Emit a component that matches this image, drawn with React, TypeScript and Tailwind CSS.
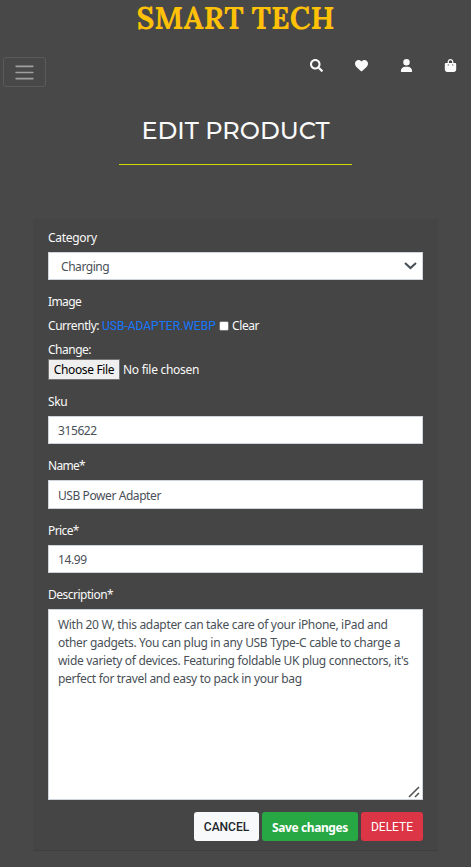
import type { ReactNode } from "react";
import { FaHeart, FaUser, FaBagShopping } from "react-icons/fa6";
import { FaSearch } from "react-icons/fa";

function Label({ children, className = "" }: { children: ReactNode; className?: string }) {
  return (
    <label className={`block h-[18px] whitespace-nowrap text-[12px] leading-[18px] text-[#fafafa] ${className}`}>
      {children}
    </label>
  );
}

function Field({ label, value, labelClass, inputClass, valueClass }: {
  label: string;
  value: string;
  labelClass: string;
  inputClass: string;
  valueClass: string;
}) {
  return (
    <>
      <Label className={labelClass}>{label}</Label>
      <div className={`mt-[5px] flex items-center border border-[#ced4da] bg-white pl-[9px] text-[12px] text-[#495057] ${inputClass}`}>
        <span className={valueClass}>{value}</span>
      </div>
    </>
  );
}

export default function App() {
  return (
    <div className="flex h-[867px] w-[471px] flex-col overflow-hidden bg-[#484848] font-['Noto_Sans',sans-serif] text-[#fafafa]">
      <header className="h-[87px]">
        <h1 className="h-[37px] text-center font-['Lora','Liberation_Serif',serif] text-[30px] leading-[37px] font-bold text-[#ffc107]">
          SMART TECH
        </h1>
        <div className="flex justify-between pr-[14px] pl-[3px]">
          <button className="mt-5 flex h-[30px] w-[43px] items-center justify-center rounded-[3px] border border-[#5b5b5b]">
            <svg width="23" height="23" viewBox="0 0 30 30" stroke="#a0a0a0" strokeWidth="2" strokeLinecap="round">
              <path d="M4 7h22M4 15h22M4 23h22" />
            </svg>
          </button>
          <nav className="mt-[22px] flex h-[13px] items-center text-[13px]">
            <FaSearch className="mr-[32px]" />
            <FaHeart className="mr-[32px]" />
            <FaUser className="mr-[31px] text-[13px]" />
            <FaBagShopping />
          </nav>
        </div>
      </header>

      <h2 className="mt-[29px] h-[30px] text-center font-['Montserrat','Lato',sans-serif] text-[24px] leading-[30px] font-medium whitespace-nowrap">
        EDIT PRODUCT
      </h2>
      <div className="mt-[18px] ml-[119px] h-px w-[233px] bg-[#d2d900]" />

      <form className="mt-[54px] ml-[33px] h-[632px] w-[405px] border-b border-[#3e3e3e] bg-[#454545] px-[15px] pt-[10px]">
        <Label className="tracking-[-0.3px]">Category</Label>
        <div className="mt-[5px] flex h-[28px] items-center justify-between border border-[#ced4da] bg-white pr-[5px] pl-[12px] text-[12px] text-[#495057]">
          <span className="pt-[2px] tracking-[-0.45px]">Charging</span>
          <svg width="13" height="8" viewBox="0 0 13 8" fill="none" stroke="#495057" strokeWidth="2.1">
            <path d="M1 1l5.5 5L12 1" />
          </svg>
        </div>

        <Label className="mt-[13px] tracking-[-0.6px]">Image</Label>
        <div className="mt-[6px] flex h-[18px] items-center text-[12px] leading-[18px] whitespace-nowrap">
          <span className="w-[54px] tracking-[-0.45px]">Currently:</span>
          <a className="w-[117px] font-['Roboto',sans-serif] text-[12px] text-[#1677ff]">USB-ADAPTER.WEBP</a>
          <span className="mr-[3px] h-[10px] w-[10px] rounded-[2px] border border-[#767676] bg-white" />
          <span className="tracking-[-0.4px]">Clear</span>
        </div>
        <Label className="mt-[6px] tracking-[-0.5px]">Change:</Label>
        <div className="flex h-[21px] items-center text-[12px] whitespace-nowrap">
          <span className="mr-[3px] flex h-[21px] w-[72px] items-center justify-center border border-[#767676] bg-[#efefef] tracking-[-0.35px] text-black">
            Choose File
          </span>
          <span className="tracking-[-0.28px]">No file chosen</span>
        </div>

        <Field label="Sku" value="315622" labelClass="mt-[13px] tracking-[-0.4px]" inputClass="h-[28px] pt-px" valueClass="tracking-[-0.4px]" />
        <Field label="Name*" value="USB Power Adapter" labelClass="mt-[13px] tracking-[-0.7px]" inputClass="h-[29px] pt-[2px]" valueClass="tracking-[-0.42px]" />
        <Field label="Price*" value="14.99" labelClass="mt-[13px] tracking-[-0.6px]" inputClass="h-[28px] pt-px" valueClass="tracking-[-0.4px]" />

        <Label className="mt-[13px] tracking-[-0.5px]">Description*</Label>
        <div className="mt-[5px] flex h-[191px] flex-col justify-between border border-[#ced4da] bg-white pt-[6px] pr-[2px] pb-[1px] pl-[9px] text-[12px] leading-[18px] text-[#495057]">
          <div className="tracking-[-0.32px] whitespace-nowrap">
            <p>With 20 W, this adapter can take care of your iPhone, iPad and</p>
            <p>other gadgets. You can plug in any USB Type-C cable to charge a</p>
            <p>wide variety of devices. Featuring foldable UK plug connectors, it's</p>
            <p>perfect for travel and easy to pack in your bag</p>
          </div>
          <svg className="self-end" width="12" height="12" viewBox="0 0 12 12" stroke="#555" strokeWidth="1.6">
            <path d="M1 11L11 1M7 11l4-4" />
          </svg>
        </div>

        <div className="mt-[12px] flex h-[29px] justify-end gap-[3px] text-[12px] whitespace-nowrap">
          <button className="w-[65px] rounded-[3px] bg-[#f8f9fa] font-['Roboto',sans-serif] font-medium text-[#212529]">CANCEL</button>
          <button className="w-[96px] rounded-[3px] bg-[#28a745] pt-[3px] font-bold tracking-[-0.4px] text-white">Save changes</button>
          <button className="w-[62px] rounded-[3px] bg-[#dc3545] font-['Roboto',sans-serif] text-white">DELETE</button>
        </div>
      </form>
    </div>
  );
}
